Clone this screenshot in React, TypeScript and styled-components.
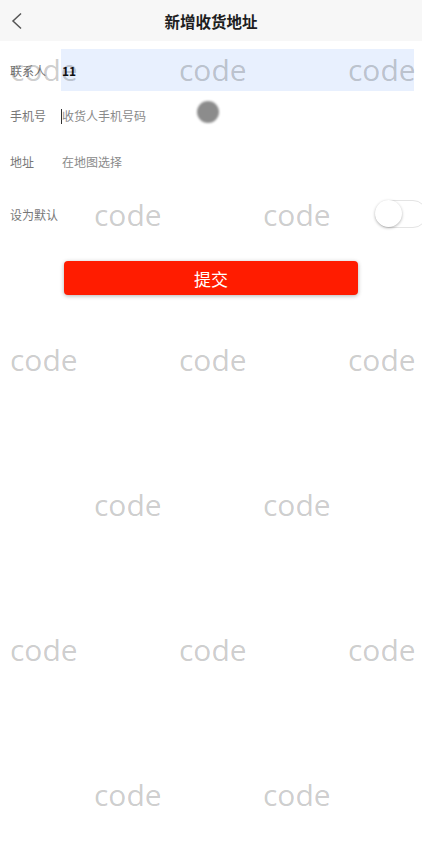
import React from "react";
import styled, { createGlobalStyle } from "styled-components";

const Global = createGlobalStyle`
  html, body { margin: 0; padding: 0; background: #fff; }
  body {
    font-family: "Noto Sans CJK SC", "Noto Sans", sans-serif;
    overflow: hidden;
    width: 422px;
    height: 868px;
  }
  * { box-sizing: border-box; }
`;

const Page = styled.div`
  position: relative;
  width: 422px;
  height: 868px;
  overflow: hidden;
  background: #fff;
`;

const Header = styled.header`
  height: 41px;
  background: #f7f7f7;
  display: grid;
  grid-template-columns: 60px 1fr 60px;
  align-items: center;
`;

const BackButton = styled.button`
  border: 0;
  background: transparent;
  padding: 0 0 0 9px;
  height: 41px;
  display: flex;
  align-items: center;
  cursor: pointer;
`;

const Title = styled.h1`
  margin: 0;
  text-align: center;
  font-size: 15.5px;
  font-weight: 700;
  color: #1e1e1e;
  letter-spacing: 0;
`;

const Form = styled.form`
  padding-top: 6px;
`;

const Row = styled.div<{ $h?: number }>`
  display: flex;
  align-items: center;
  height: ${(p) => p.$h ?? 46}px;
  padding: 0 8px 0 10px;
`;

const Label = styled.label`
  width: 51px;
  flex: none;
  font-size: 12px;
  color: #777;
  white-space: nowrap;
`;

const Field = styled.div<{ $caret?: boolean }>`
  position: relative;
  flex: 1;
  height: 42px;
  display: flex;
  align-items: center;
  &::before {
    content: "";
    display: ${(p) => (p.$caret ? "block" : "none")};
    position: absolute;
    left: 0;
    top: 14px;
    width: 1px;
    height: 15px;
    background: #333;
  }
`;

const Input = styled.input<{ $filled?: boolean }>`
  width: 100%;
  height: 42px;
  border: 0;
  outline: none;
  padding: 0 0 0 1px;
  font-family: inherit;
  font-size: 12px;
  color: #111;
  font-weight: ${(p) => (p.$filled ? 700 : 400)};
  background: ${(p) => (p.$filled ? "#e8f0fe" : "transparent")};
  &::placeholder { color: #8a8a8a; font-weight: 400; }
`;

const Track = styled.div`
  margin-left: auto;
  margin-right: -13px;
  width: 52px;
  height: 28px;
  border-radius: 14px;
  border: 1px solid #e4e4e4;
  background: #fff;
  position: relative;
  flex: none;
`;

const Thumb = styled.span`
  position: absolute;
  left: -1px;
  top: -1px;
  width: 27px;
  height: 27px;
  border-radius: 50%;
  background: #fff;
  box-shadow: 0 1px 3px rgba(0, 0, 0, 0.3);
`;

const Submit = styled.button`
  display: block;
  margin: 17px auto 0;
  width: 294px;
  height: 34px;
  border: 0;
  border-radius: 4px;
  background: #ff1c00;
  color: #fff;
  font-family: inherit;
  font-size: 17px;
  box-shadow: 0 1px 4px rgba(0, 0, 0, 0.3);
`;

const TouchDot = styled.span`
  position: absolute;
  left: 197px;
  top: 101px;
  width: 22px;
  height: 22px;
  border-radius: 50%;
  background: #8c8c8c;
  filter: blur(0.8px);
  pointer-events: none;
`;

const Watermark = styled.div`
  position: absolute;
  inset: 0;
  padding-top: 52px;
  pointer-events: none;
  display: flex;
  flex-direction: column;
`;

const MarkRow = styled.div<{ $offset: number }>`
  height: 145px;
  flex: none;
  display: flex;
  padding-left: ${(p) => p.$offset}px;
`;

const Mark = styled.span`
  width: 169px;
  flex: none;
  font-family: "Open Sans", sans-serif;
  font-size: 30px;
  line-height: 36px;
  height: 36px;
  color: rgba(0, 0, 0, 0.21);
`;

export default function App() {
  const rows = [0, 1, 2, 3, 4, 5];
  return (
    <>
      <Global />
      <Page>
        <Header>
          <BackButton aria-label="返回">
            <svg width="14" height="18" viewBox="0 0 14 18">
              <path d="M12 1.5 L4 9 L12 16.5" fill="none" stroke="#555" strokeWidth="1.5" />
            </svg>
          </BackButton>
          <Title>新增收货地址</Title>
          <span />
        </Header>
        <Form>
          <Row>
            <Label>联系人</Label>
            <Field>
              <Input $filled defaultValue="11" />
            </Field>
          </Row>
          <Row $h={45}>
            <Label>手机号</Label>
            <Field $caret>
              <Input placeholder="收货人手机号码" />
            </Field>
          </Row>
          <Row>
            <Label>地址</Label>
            <Field>
              <Input placeholder="在地图选择" />
            </Field>
          </Row>
          <Row $h={60}>
            <Label>设为默认</Label>
            <Track>
              <Thumb />
            </Track>
          </Row>
          <Submit type="button">提交</Submit>
        </Form>
        <TouchDot />
        <Watermark>
          {rows.map((r) => (
            <MarkRow key={r} $offset={r % 2 === 0 ? 10 : 94}>
              {(r % 2 === 0 ? [0, 1, 2] : [0, 1]).map((c) => (
                <Mark key={c}>code</Mark>
              ))}
            </MarkRow>
          ))}
        </Watermark>
      </Page>
    </>
  );
}
